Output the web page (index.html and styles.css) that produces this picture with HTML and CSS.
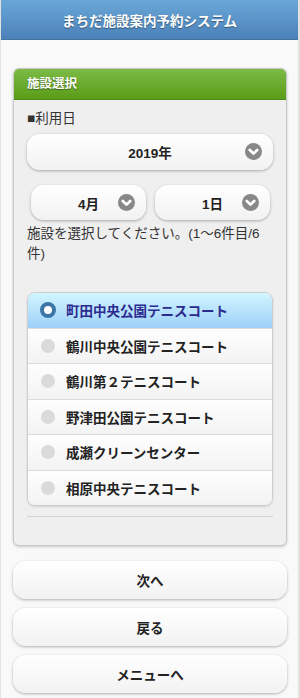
FILE: index.html
```html
<!DOCTYPE html>
<html lang="ja">
<head>
  <meta charset="UTF-8">
  <meta name="viewport" content="width=device-width, initial-scale=1.0">
  <title>まちだ施設案内予約システム</title>
  <link rel="stylesheet" href="styles.css">
</head>
<body>
  <div class="page">
    <header class="header">
      <h1>まちだ施設案内予約システム</h1>
    </header>

    <div class="content">
      <div class="card">
        <div class="card-head">施設選択</div>
        <div class="card-body">
          <div class="label">■利用日</div>

          <div class="select">
            <span>2019年</span>
            <i class="arrow"><svg viewBox="0 0 16 16"><path d="M4.5 6.5 L8 10 L11.5 6.5" /></svg></i>
          </div>

          <div class="select-row">
            <div class="select">
              <span>4月</span>
              <i class="arrow"><svg viewBox="0 0 16 16"><path d="M4.5 6.5 L8 10 L11.5 6.5" /></svg></i>
            </div>
            <div class="select">
              <span>1日</span>
              <i class="arrow"><svg viewBox="0 0 16 16"><path d="M4.5 6.5 L8 10 L11.5 6.5" /></svg></i>
            </div>
          </div>

          <p class="note">施設を選択してください。(1〜6件目/6件)</p>

          <ul class="facilities">
            <li class="active"><i class="radio"></i>町田中央公園テニスコート</li>
            <li><i class="radio"></i>鶴川中央公園テニスコート</li>
            <li><i class="radio"></i>鶴川第２テニスコート</li>
            <li><i class="radio"></i>野津田公園テニスコート</li>
            <li><i class="radio"></i>成瀬クリーンセンター</li>
            <li><i class="radio"></i>相原中央テニスコート</li>
          </ul>

          <hr class="rule">
        </div>
      </div>

      <div class="buttons">
        <button class="btn">次へ</button>
        <button class="btn">戻る</button>
        <button class="btn">メニューへ</button>
      </div>
    </div>
  </div>
</body>
</html>
```

FILE: styles.css
```css
body {
  margin: 0;
  font-family: "Liberation Sans", "Noto Sans CJK JP", sans-serif;
  font-size: 13.5px;
  color: #333;
  background-color: #f9f9f9;
}
.page {
  min-height: 698px;
  border-left: 1px solid #e2e2e2;
  border-right: 2px solid #e2e2e2;
  box-sizing: border-box;
}
.header {
  height: 40px;
  background: linear-gradient(#6aa7d8, #4b81b9);
  border-bottom: 1px solid #44739f;
  box-sizing: border-box;
  display: flex;
  align-items: center;
  justify-content: center;
}
.header h1 {
  margin: 0;
  font-size: 13.5px;
  font-weight: bold;
  color: #fff;
  text-shadow: 0 1px 1px rgba(0, 0, 0, 0.4);
}
.content {
  padding: 28px 11px 6px 12px;
}
.card {
  border: 1px solid #c8c8c8;
  border-radius: 6px;
  background-color: #efefef;
  box-shadow: 0 1px 3px rgba(0, 0, 0, 0.2);
  overflow: hidden;
}
.card-head {
  height: 30px;
  line-height: 30px;
  padding: 0 13px;
  background: linear-gradient(#7cba46, #5a9d18);
  border-bottom: 1px solid #4f8a18;
  color: #fff;
  font-weight: bold;
  font-size: 12.5px;
  text-shadow: 0 1px 1px rgba(0, 0, 0, 0.4);
}
.card-body {
  padding: 10px 13px 28px 13px;
}
.label {
  line-height: 18px;
  margin-bottom: 6px;
}
.select {
  position: relative;
  height: 36px;
  border-radius: 13px;
  background: linear-gradient(#fff, #f2f2f2);
  box-shadow: 0 1px 3px rgba(0, 0, 0, 0.3);
  display: flex;
  align-items: center;
  justify-content: center;
  font-weight: bold;
  color: #222;
}
.arrow {
  position: absolute;
  right: 11px;
  top: 9px;
  width: 17px;
  height: 17px;
  border-radius: 50%;
  background-color: #888;
  display: flex;
}
.arrow svg {
  width: 17px;
  height: 17px;
  fill: none;
  stroke: #fff;
  stroke-width: 2.6;
  stroke-linecap: round;
  stroke-linejoin: round;
}
.select-row {
  display: grid;
  grid-template-columns: 1fr 1fr;
  gap: 9px;
  padding: 0 3px 0 4px;
  margin-top: 15px;
}
.select-row .select {
  height: 35px;
}
.note {
  margin: 4px 0 0;
  line-height: 20px;
  padding-right: 8px;
}
.facilities {
  list-style: none;
  margin: 28px 0 0;
  padding: 0;
  border: 1px solid #cdcdcd;
  border-radius: 8px;
  overflow: hidden;
  box-shadow: 0 1px 2px rgba(0, 0, 0, 0.12);
}
.facilities li {
  height: 34.5px;
  display: flex;
  align-items: center;
  padding-left: 38px;
  position: relative;
  border-top: 1px solid #dcdcdc;
  background: linear-gradient(#fefefe, #f3f3f3);
  font-weight: bold;
  color: #222;
}
.facilities li:first-child {
  border-top: none;
}
.facilities li.active {
  background: linear-gradient(#d2f6ff, #9dcff9);
  color: #2b2a8f;
}
.radio {
  position: absolute;
  left: 13px;
  top: 10px;
  width: 14px;
  height: 14px;
  border-radius: 50%;
  background-color: #dadada;
}
.active .radio {
  background-color: #fff;
  border: 4px solid #3b76a6;
  box-sizing: border-box;
  left: 12px;
  width: 16px;
  height: 16px;
  top: 9px;
}
.rule {
  margin: 10px 0 0;
  border: none;
  border-top: 1px solid #d2d2d2;
}
.buttons {
  margin-top: 15px;
  display: flex;
  flex-direction: column;
  gap: 9px;
}
.btn {
  height: 38px;
  border: none;
  border-radius: 13px;
  background: linear-gradient(#fff, #f2f2f2);
  box-shadow: 0 1px 3px rgba(0, 0, 0, 0.3);
  font-family: inherit;
  font-size: 13.5px;
  font-weight: bold;
  color: #222;
}
```
